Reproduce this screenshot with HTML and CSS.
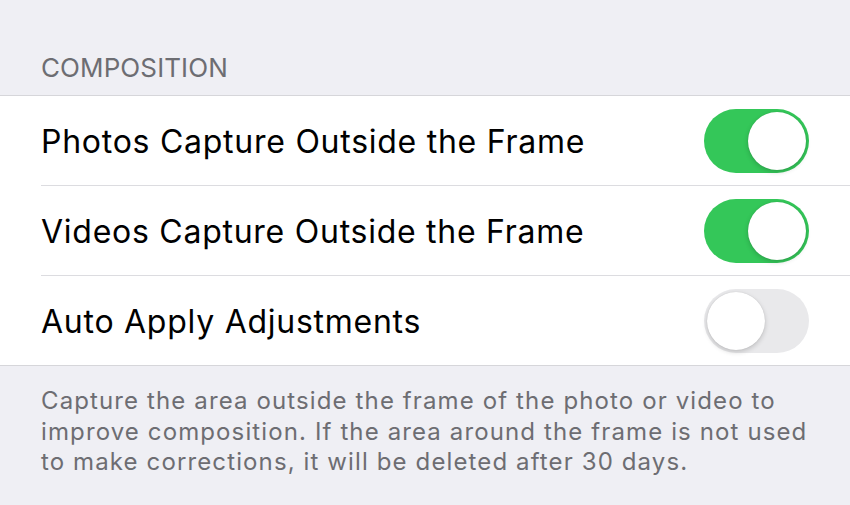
FILE: index.html
```html
<!DOCTYPE html>
<html>
<head>
<meta charset="utf-8">
<link rel="stylesheet" href="styles.css">
</head>
<body>
<div class="page">
  <div class="section-header">COMPOSITION</div>
  <div class="list">
    <div class="row">
      <span class="label">Photos Capture Outside the Frame</span>
      <span class="toggle on"><span class="knob"></span></span>
    </div>
    <div class="row">
      <span class="label">Videos Capture Outside the Frame</span>
      <span class="toggle on"><span class="knob"></span></span>
    </div>
    <div class="row last">
      <span class="label">Auto Apply Adjustments</span>
      <span class="toggle"><span class="knob"></span></span>
    </div>
  </div>
  <div class="footer">Capture the area outside the frame of the photo or video to improve composition. If the area around the frame is not used to make corrections, it will be deleted after 30 days.</div>
</div>
</body>
</html>
```
FILE: styles.css
```css
html, body {
  margin: 0;
  padding: 0;
  background: #efeff4;
  font-family: Inter, "Noto Sans", sans-serif;
}
.page {
  width: 850px;
  height: 505px;
  overflow: hidden;
}
.section-header {
  height: 96px;
  box-sizing: border-box;
  padding: 52px 0 0 41px;
  font-size: 26px;
  line-height: 32px;
  color: #6d6d72;
  border-bottom: 1px solid #d6d6da;
  letter-spacing: 0.1px;
}
.list {
  background: #fff;
  border-bottom: 1px solid #d6d6da;
}
.row {
  height: 90px;
  margin-left: 41px;
  padding-right: 41px;
  display: flex;
  align-items: center;
  justify-content: space-between;
  border-bottom: 1px solid #dcdce0;
  box-sizing: border-box;
}
.row.last {
  border-bottom: none;
  height: 89px;
}
.label {
  font-size: 32px;
  color: #000;
  letter-spacing: 0.74px;
  padding-top: 2px;
}
.toggle {
  width: 105px;
  height: 64px;
  border-radius: 32px;
  background: #e9e9eb;
  position: relative;
  flex: none;
}
.toggle.on {
  background: #34c759;
}
.knob {
  position: absolute;
  top: 3px;
  left: 3px;
  width: 58px;
  height: 58px;
  border-radius: 50%;
  background: #fff;
  box-shadow: 0 2px 5px rgba(0,0,0,0.18), 0 0 1px rgba(0,0,0,0.15);
}
.toggle.on .knob {
  left: 44px;
}
.footer {
  padding: 20px 20px 0 41px;
  font-size: 24px;
  line-height: 30.5px;
  color: #6d6d72;
  letter-spacing: 1.12px;
}
```
